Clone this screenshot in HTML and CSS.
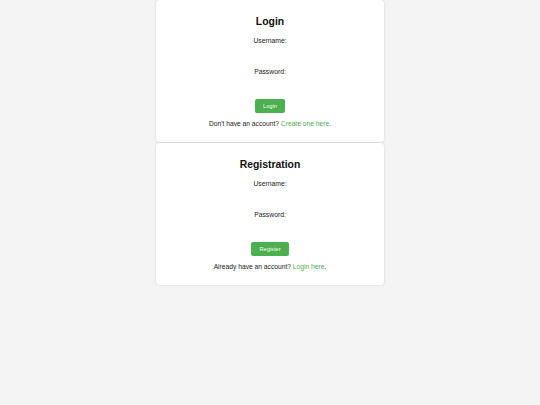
FILE: index.html
```html
<!DOCTYPE html>
<html lang="en">
<head>
    <meta charset="UTF-8">
    <meta name="viewport" content="width=device-width, initial-scale=1.0">
    <title>Login and Registration</title>
    <link rel="stylesheet" href="styles.css">
</head>
<body>
    <div class="container">
        <div class="card">
            <h2>Login</h2>
            <form>
                <label for="loginUser">Username:</label>
                <input type="text" id="loginUser">
                <label for="loginPass">Password:</label>
                <input type="password" id="loginPass">
                <button type="button">Login</button>
            </form>
            <p class="switch">Don't have an account? <a href="#">Create one here</a>.</p>
        </div>

        <div class="card">
            <h2>Registration</h2>
            <form>
                <label for="regUser">Username:</label>
                <input type="text" id="regUser">
                <label for="regPass">Password:</label>
                <input type="password" id="regPass">
                <button type="button">Register</button>
            </form>
            <p class="switch">Already have an account? <a href="#">Login here</a>.</p>
        </div>
    </div>
</body>
</html>
```

FILE: styles.css
```css
body {
    font-family: "Liberation Sans", Arial, sans-serif;
    background-color: #f4f4f4;
    margin: 0;
    padding: 0;
    color: #222;
}
.container {
    width: 228px;
    margin: 0 auto;
}
.card {
    background-color: #fff;
    border-radius: 4px;
    box-shadow: 0 0 3px rgba(0, 0, 0, 0.15);
    padding: 16px 16px 14px;
    text-align: center;
    margin-bottom: 1px;
}
h2 {
    font-size: 10.4px;
    line-height: 12px;
    margin: 0 0 9px;
    color: #111;
}
form {
    display: flex;
    flex-direction: column;
    align-items: center;
}
label {
    display: block;
    font-size: 6.8px;
    line-height: 8px;
    color: #222;
}
input {
    display: block;
    width: 100%;
    height: 23px;
    border: none;
    padding: 0;
    margin: 0;
    background: transparent;
}
button {
    background-color: #4caf50;
    color: #f4fbf4;
    border: none;
    border-radius: 2px;
    font-family: "Liberation Sans", Arial, sans-serif;
    font-size: 5.7px;
    font-weight: normal;
    height: 14px;
    padding: 0 8px;
    margin: 0;
    cursor: pointer;
}
.switch {
    font-size: 6.7px;
    line-height: 8px;
    margin: 7px 0 0;
    color: #222;
}
.switch a {
    color: #4caf50;
    text-decoration: none;
}
```
